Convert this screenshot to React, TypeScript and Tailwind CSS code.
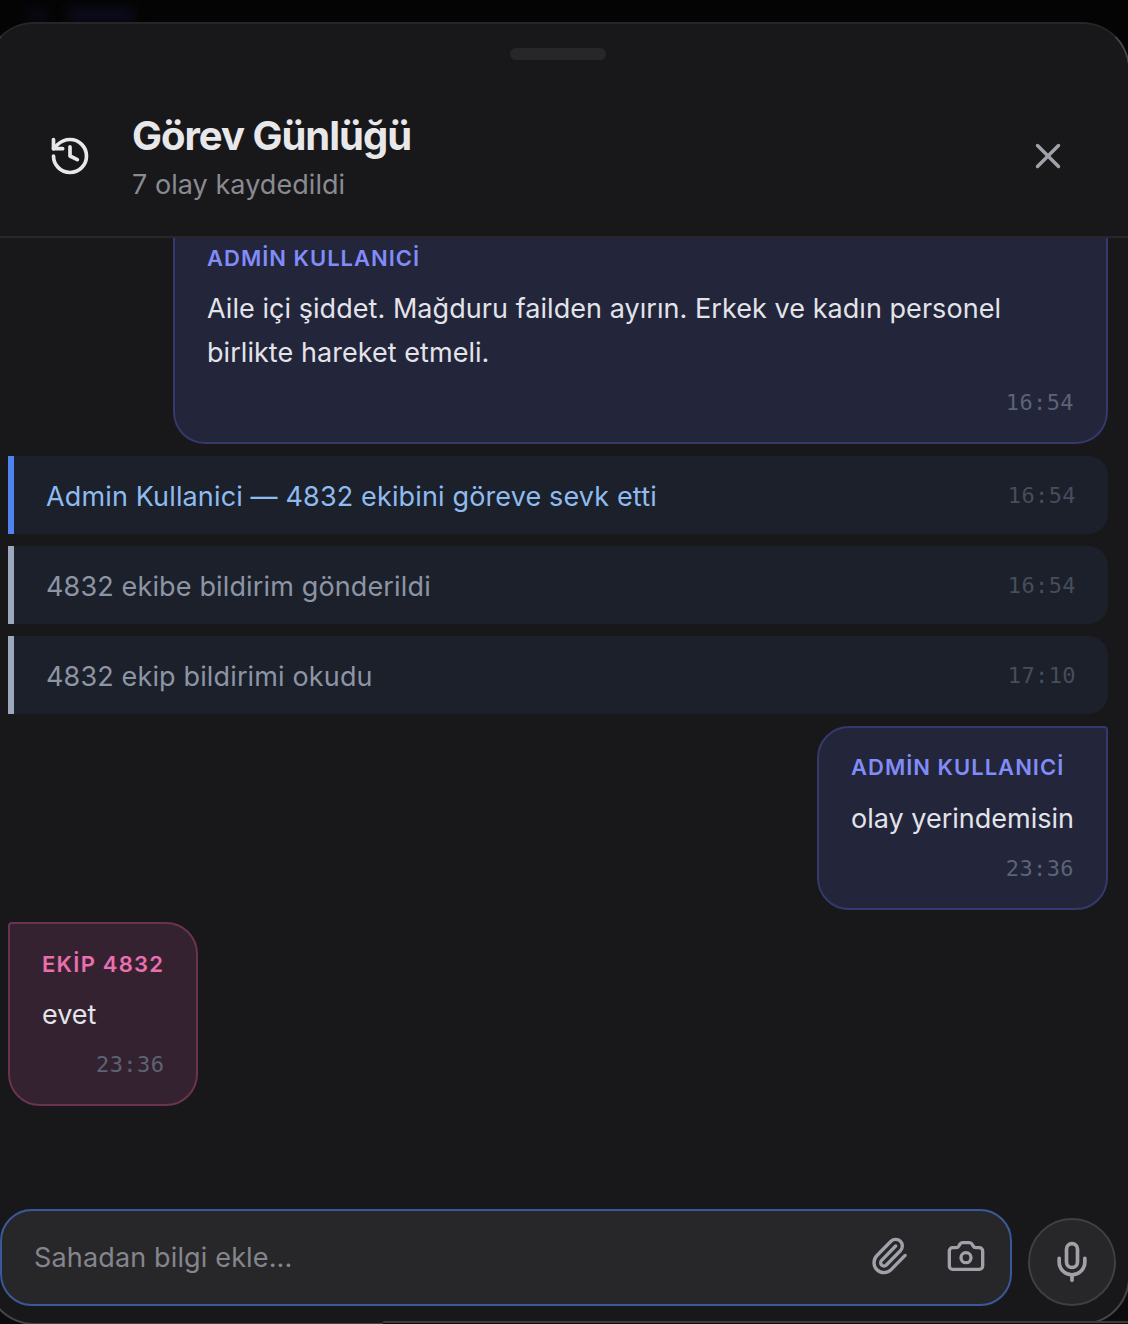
import { History, X, Paperclip, Camera, Mic } from "lucide-react";

const inter = "font-['Inter',sans-serif]";

function Stamp({ children, className = "text-[#5b6474]" }: { children: string; className?: string }) {
  return (
    <span className={"font-['DejaVu_Sans_Mono',monospace] text-[22px] leading-none tracking-[0.4px] " + className}>
      {children}
    </span>
  );
}

function LogRow({ text, time, active }: { text: string; time: string; active?: boolean }) {
  return (
    <div
      className={
        "flex h-[78px] shrink-0 items-center justify-between rounded-r-[20px] border-l-[6px] bg-[#1c202a] pl-[32px] pr-[32px] pt-[2px] " +
        (active ? "border-[#4f83f1]" : "border-[#9ca8bc]")
      }
    >
      <span className={"pt-[2px] text-[27px] tracking-[0.14px] " + (active ? "text-[#8fbcf0]" : "text-[#8c95a5]")}>{text}</span>
      <Stamp className="text-[#464d5b]">{time}</Stamp>
    </div>
  );
}

function Bubble({
  name,
  text,
  time,
  mine,
}: {
  name: string;
  text: string;
  time: string;
  mine?: boolean;
}) {
  return (
    <div
      className={
        "h-[184px] shrink-0 rounded-[32px] border-2 px-[32px] " +
        (mine
          ? "self-end rounded-tr-[4px] border-[#35396b] bg-[#23253a] pt-[24px]"
          : "self-start rounded-tl-[4px] border-[#6a3350] bg-[#352230] pt-[25px]")
      }
    >
      <div
        className={
          "text-[22px] font-semibold leading-[30px] " +
          (mine ? "tracking-[1px] text-[#818cf8]" : "tracking-[1.25px] text-[#e96fae]")
        }
      >
        {name}
      </div>
      <div className={"text-[27px] leading-[44px] text-[#e2e4ea] " + (mine ? "mt-[15px]" : "mt-[14px]")}>{text}</div>
      <div className="mt-[17px] flex justify-end">
        <Stamp>{time}</Stamp>
      </div>
    </div>
  );
}

export default function App() {
  return (
    <div className={"relative h-[1324px] w-[1128px] overflow-hidden bg-gradient-to-b from-[#040404] to-[#0c0c0d] pt-[22px] " + inter}>
      {/* faint glow behind the sheet */}
      <div className="absolute left-[26px] top-[8px] h-[14px] w-[22px] bg-[#11122a] opacity-40 blur-[6px]" />
      <div className="absolute left-[68px] top-[8px] h-[14px] w-[66px] bg-[#14153a] opacity-50 blur-[6px]" />

      <div className="relative -ml-[14px] flex h-[1303px] w-[1144px] flex-col overflow-hidden rounded-[48px] border-2 border-[#454547] border-t-[#262628] bg-[#18181b]">
        <header className="relative z-10 h-[214px] shrink-0 border-b-2 border-[#27272a] bg-[#18181b]">
          <div className="ml-[522px] mt-[24px] h-[12px] w-[96px] rounded-full bg-[#27272a]" />
          <div className="mt-[49px] flex items-center justify-between pl-[60px] pr-[59px]">
            <div className="flex items-center gap-[40px]">
              <History className="mb-[2px] h-[44px] w-[44px] text-[#e8e8ea]" strokeWidth={2} />
              <div>
                <h1 className="text-[40px] font-bold leading-[54px] tracking-[-1px] text-[#e8e8ea]">Görev Günlüğü</h1>
                <p className="mt-[3px] text-[27px] leading-[38px] tracking-[0.05px] text-[#8a8a91]">7 olay kaydedildi</p>
              </div>
            </div>
            <X className="mb-[2px] h-[42px] w-[42px] text-[#a1a1aa]" strokeWidth={2} />
          </div>
        </header>

        <div className="flex flex-1 flex-col gap-[12px] overflow-hidden pl-[20px] pr-[20px]">
          <div className="-mt-[8px] ml-[165px] h-[214px] shrink-0 rounded-b-[32px] border-2 border-t-0 border-[#35396b] bg-[#23253a] pl-[32px] pr-[32px] pt-[13px]">
            <div className="text-[22px] font-semibold leading-[30px] tracking-[1px] text-[#818cf8]">ADMİN KULLANICİ</div>
            <div className="mt-[14px] text-[27px] leading-[44px] tracking-[0.05px] text-[#e2e4ea]">
              Aile içi şiddet. Mağduru failden ayırın. Erkek ve kadın personel birlikte hareket etmeli.
            </div>
            <div className="mt-[17px] flex justify-end">
              <Stamp>16:54</Stamp>
            </div>
          </div>
          <LogRow active text="Admin Kullanici — 4832 ekibini göreve sevk etti" time="16:54" />
          <LogRow text="4832 ekibe bildirim gönderildi" time="16:54" />
          <LogRow text="4832 ekip bildirimi okudu" time="17:10" />
          <Bubble mine name="ADMİN KULLANICİ" text="olay yerindemisin" time="23:36" />
          <Bubble name="EKİP 4832" text="evet" time="23:36" />
        </div>

        <div className="flex shrink-0 items-end gap-[16px] pb-[17px] pl-[12px] pr-[12px]">
          <div className="flex h-[97px] flex-1 items-center rounded-[32px] border-2 border-[#3b5998] bg-[#27272a] pl-[32px] pr-[24px]">
            <span className="flex-1 pt-[2px] text-[27px] tracking-[0.15px] text-[#85858d]">Sahadan bilgi ekle...</span>
            <Paperclip className="mb-[3px] mr-[37px] h-[40px] w-[40px] text-[#a1a1aa]" strokeWidth={2} />
            <Camera className="mb-[3px] h-[40px] w-[40px] text-[#a1a1aa]" strokeWidth={2} />
          </div>
          <div className="flex h-[88px] w-[88px] items-center justify-center rounded-full border-2 border-[#3f3f46] bg-[#27272a]">
            <Mic className="h-[44px] w-[44px] text-[#a1a1aa]" strokeWidth={2} />
          </div>
        </div>
      </div>

      {/* edge of the panel underneath */}
      <div className="absolute bottom-0 left-[382px] right-0 h-[3px] rounded-tl-[12px] border-t-2 border-[#3c3c3a] bg-[#0e0e0a]" />
    </div>
  );
}
